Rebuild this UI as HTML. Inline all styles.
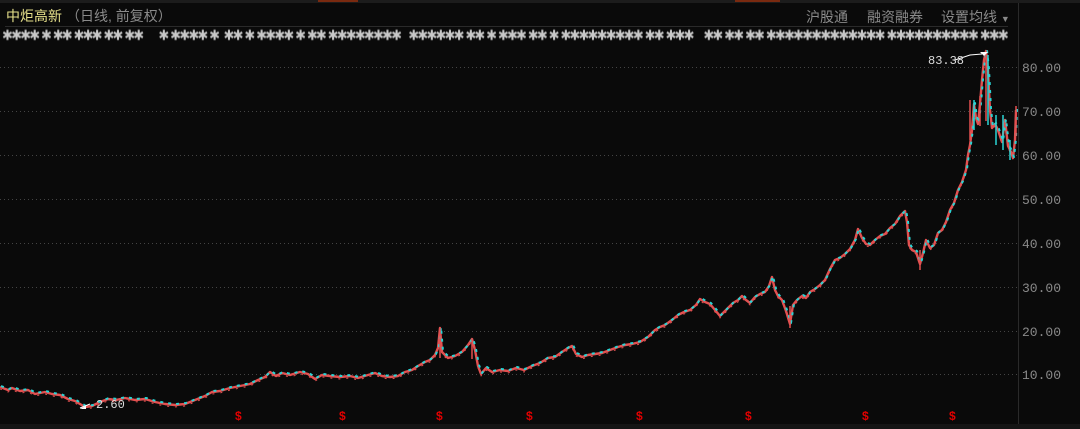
<!DOCTYPE html>
<html><head><meta charset="utf-8"><style>
body{margin:0;background:#0a0a0a;width:1080px;height:429px;overflow:hidden;font-family:"Liberation Sans","Noto Sans CJK SC",sans-serif}
.t{position:absolute;white-space:nowrap}
</style></head><body>
<div style="position:absolute;left:0;top:0;width:1080px;height:3px;background:#1c1c1c"></div>
<div style="position:absolute;left:318px;top:0;width:40px;height:2px;background:#7a2a10"></div>
<div style="position:absolute;left:735px;top:0;width:45px;height:2px;background:#7a2a10"></div>
<div class="t" style="left:6px;top:6px;font-size:14px;color:#e6e08a">中炬高新</div>
<div class="t" style="left:66px;top:6px;font-size:14px;color:#8a8a8a">（日线, 前复权）</div>
<div class="t" style="left:806px;top:7px;font-size:14px;color:#8a8a8a">沪股通</div>
<div class="t" style="left:867px;top:7px;font-size:14px;color:#8a8a8a">融资融券</div>
<div class="t" style="left:941px;top:7px;font-size:14px;color:#8a8a8a">设置均线 <span style="font-size:9px">▼</span></div>
<div style="position:absolute;left:5px;top:26px;width:1003px;height:1px;background:#2a2a2a"></div>
<div style="position:absolute;left:1018px;top:3px;width:1px;height:426px;background:#2a2a2a"></div>
<div style="position:absolute;left:0;top:424px;width:1080px;height:5px;background:#151515"></div>
<div class="t" style="left:2px;top:28px;font-size:14px;color:#c8c8c8;font-family:'DejaVu Sans',sans-serif;letter-spacing:-2px;font-weight:bold;filter:blur(0.4px);transform:scaleX(0.932);transform-origin:0 0">✱✱✱✱ ✱ ✱✱ ✱✱✱ ✱✱ ✱✱&nbsp;&nbsp;&nbsp;&nbsp;&nbsp; ✱ ✱✱✱✱ ✱ &nbsp;✱✱ ✱ ✱✱✱✱ ✱ ✱✱ ✱✱✱✱✱✱✱✱ &nbsp;&nbsp;✱✱✱✱✱✱ ✱✱ ✱ ✱✱✱ ✱✱ ✱ ✱✱✱✱✱✱✱✱✱ ✱✱ ✱✱✱ &nbsp;&nbsp;&nbsp;✱✱ ✱✱ ✱✱ ✱✱✱✱✱✱✱✱✱✱✱✱✱ ✱✱✱✱✱✱✱✱✱✱ ✱✱✱</div>
<svg width="1080" height="429" style="position:absolute;left:0;top:0">
<defs>
<polyline id="line" points="0,387 8,390 12,388 20,391 28,390 35,394 45,392 52,394 60,395 68,399 75,401 85,407 92,406 100,402 108,399 116,400 125,398 135,400 145,399 155,402 165,404 175,405 185,404 195,400 205,396 212,392 220,391 230,388 240,386 250,384 258,380 265,377 270,372 276,376 282,373 290,375 300,372 308,374 315,379 322,375 330,376 340,377 350,376 358,378 368,375 375,373 382,376 390,377 398,376 405,372 412,370 418,366 425,362 430,360 435,355 438,348 440,328 442,352 448,358 455,356 462,352 468,345 472,339 475,350 478,366 481,374 486,368 492,372 500,370 508,371 516,368 524,370 532,366 540,363 548,358 555,357 562,352 568,348 572,346 576,354 582,357 588,355 595,354 602,353 610,350 618,347 625,345 632,344 640,342 648,337 655,330 660,327 665,325 672,320 678,315 684,312 690,310 696,305 700,299 705,302 710,304 715,310 720,316 724,312 728,308 733,303 738,300 742,296 746,300 750,303 755,297 760,294 765,292 769,286 772,277 775,290 778,296 782,300 786,311 790,324 793,305 797,300 802,296 806,298 810,292 815,289 820,285 825,280 830,269 835,260 840,258 845,254 850,249 855,240 858,229 862,238 866,244 870,245 875,240 880,236 885,234 890,228 895,224 900,216 905,211 907,222 909,245 912,250 916,252 920,264 923,253 926,240 930,248 934,245 938,233 942,230 946,222 950,210 954,203 958,190 962,182 966,170 968,155 970,145 972,130 974,104 976,118 978,124 980,104 982,80 984,60 986,51 988,70 990,110 992,128 995,124 998,130 1002,142 1005,120 1008,146 1011,152 1013,158 1015,140 1016,110"/>
</defs>
<g stroke="#444" stroke-dasharray="1,3" stroke-width="1">
<line x1="0" y1="67.5" x2="1018" y2="67.5"/><line x1="0" y1="111.5" x2="1018" y2="111.5"/>
<line x1="0" y1="155.5" x2="1018" y2="155.5"/><line x1="0" y1="199.5" x2="1018" y2="199.5"/>
<line x1="0" y1="243.5" x2="1018" y2="243.5"/><line x1="0" y1="287.5" x2="1018" y2="287.5"/>
<line x1="0" y1="331.5" x2="1018" y2="331.5"/><line x1="0" y1="374.5" x2="1018" y2="374.5"/>
</g>
<g font-family="Liberation Mono,monospace" font-size="13" fill="#8a8a8a">
<text x="1022" y="72">80.00</text><text x="1022" y="116">70.00</text><text x="1022" y="160">60.00</text>
<text x="1022" y="204">50.00</text><text x="1022" y="248">40.00</text><text x="1022" y="292">30.00</text>
<text x="1022" y="336">20.00</text><text x="1022" y="379">10.00</text>
</g>
<g fill="none" stroke-linejoin="round">
<use href="#line" stroke="#e35050" stroke-width="2.4"/>
<use href="#line" stroke="#2ad4d4" stroke-width="2" stroke-dasharray="3,5" transform="translate(1,-1)"/>
<use href="#line" stroke="#e35050" stroke-width="1" stroke-dasharray="2,6" transform="translate(0,2)"/>
</g>
<g stroke="#e35050" stroke-width="1.5" fill="none">
<path d="M440 328v30M472 339v20M790 306v22M920 250v20M970 100v40M980 96v30M986 51v70M1016 106v30"/>
</g>
<g stroke="#2ad4d4" stroke-width="1.5"><path d="M974 100v30M988 55v70M1010 140v20M1003 115v35M996 115v30"/></g>
<path d="M955 60 L970 55 L982 54" stroke="#fff" fill="none" stroke-width="1"/>
<path d="M980 52 L988 52 L984 56z" fill="#fff"/>
<text x="928" y="64" font-family="Liberation Mono,monospace" font-size="12" fill="#dcdcdc">83.38</text>
<path d="M80 408 L90 404" stroke="#fff"/><path d="M80 409 L86 406 L86 409z" fill="#fff"/>
<text x="96" y="408" font-family="Liberation Mono,monospace" font-size="12" fill="#dcdcdc">2.60</text>
<g font-family="Liberation Sans,sans-serif" font-size="12" font-weight="bold" fill="#e00000">
<text x="235" y="420">$</text><text x="339" y="420">$</text><text x="436" y="420">$</text><text x="526" y="420">$</text>
<text x="636" y="420">$</text><text x="745" y="420">$</text><text x="862" y="420">$</text><text x="949" y="420">$</text>
</g>
</svg>
</body></html>
